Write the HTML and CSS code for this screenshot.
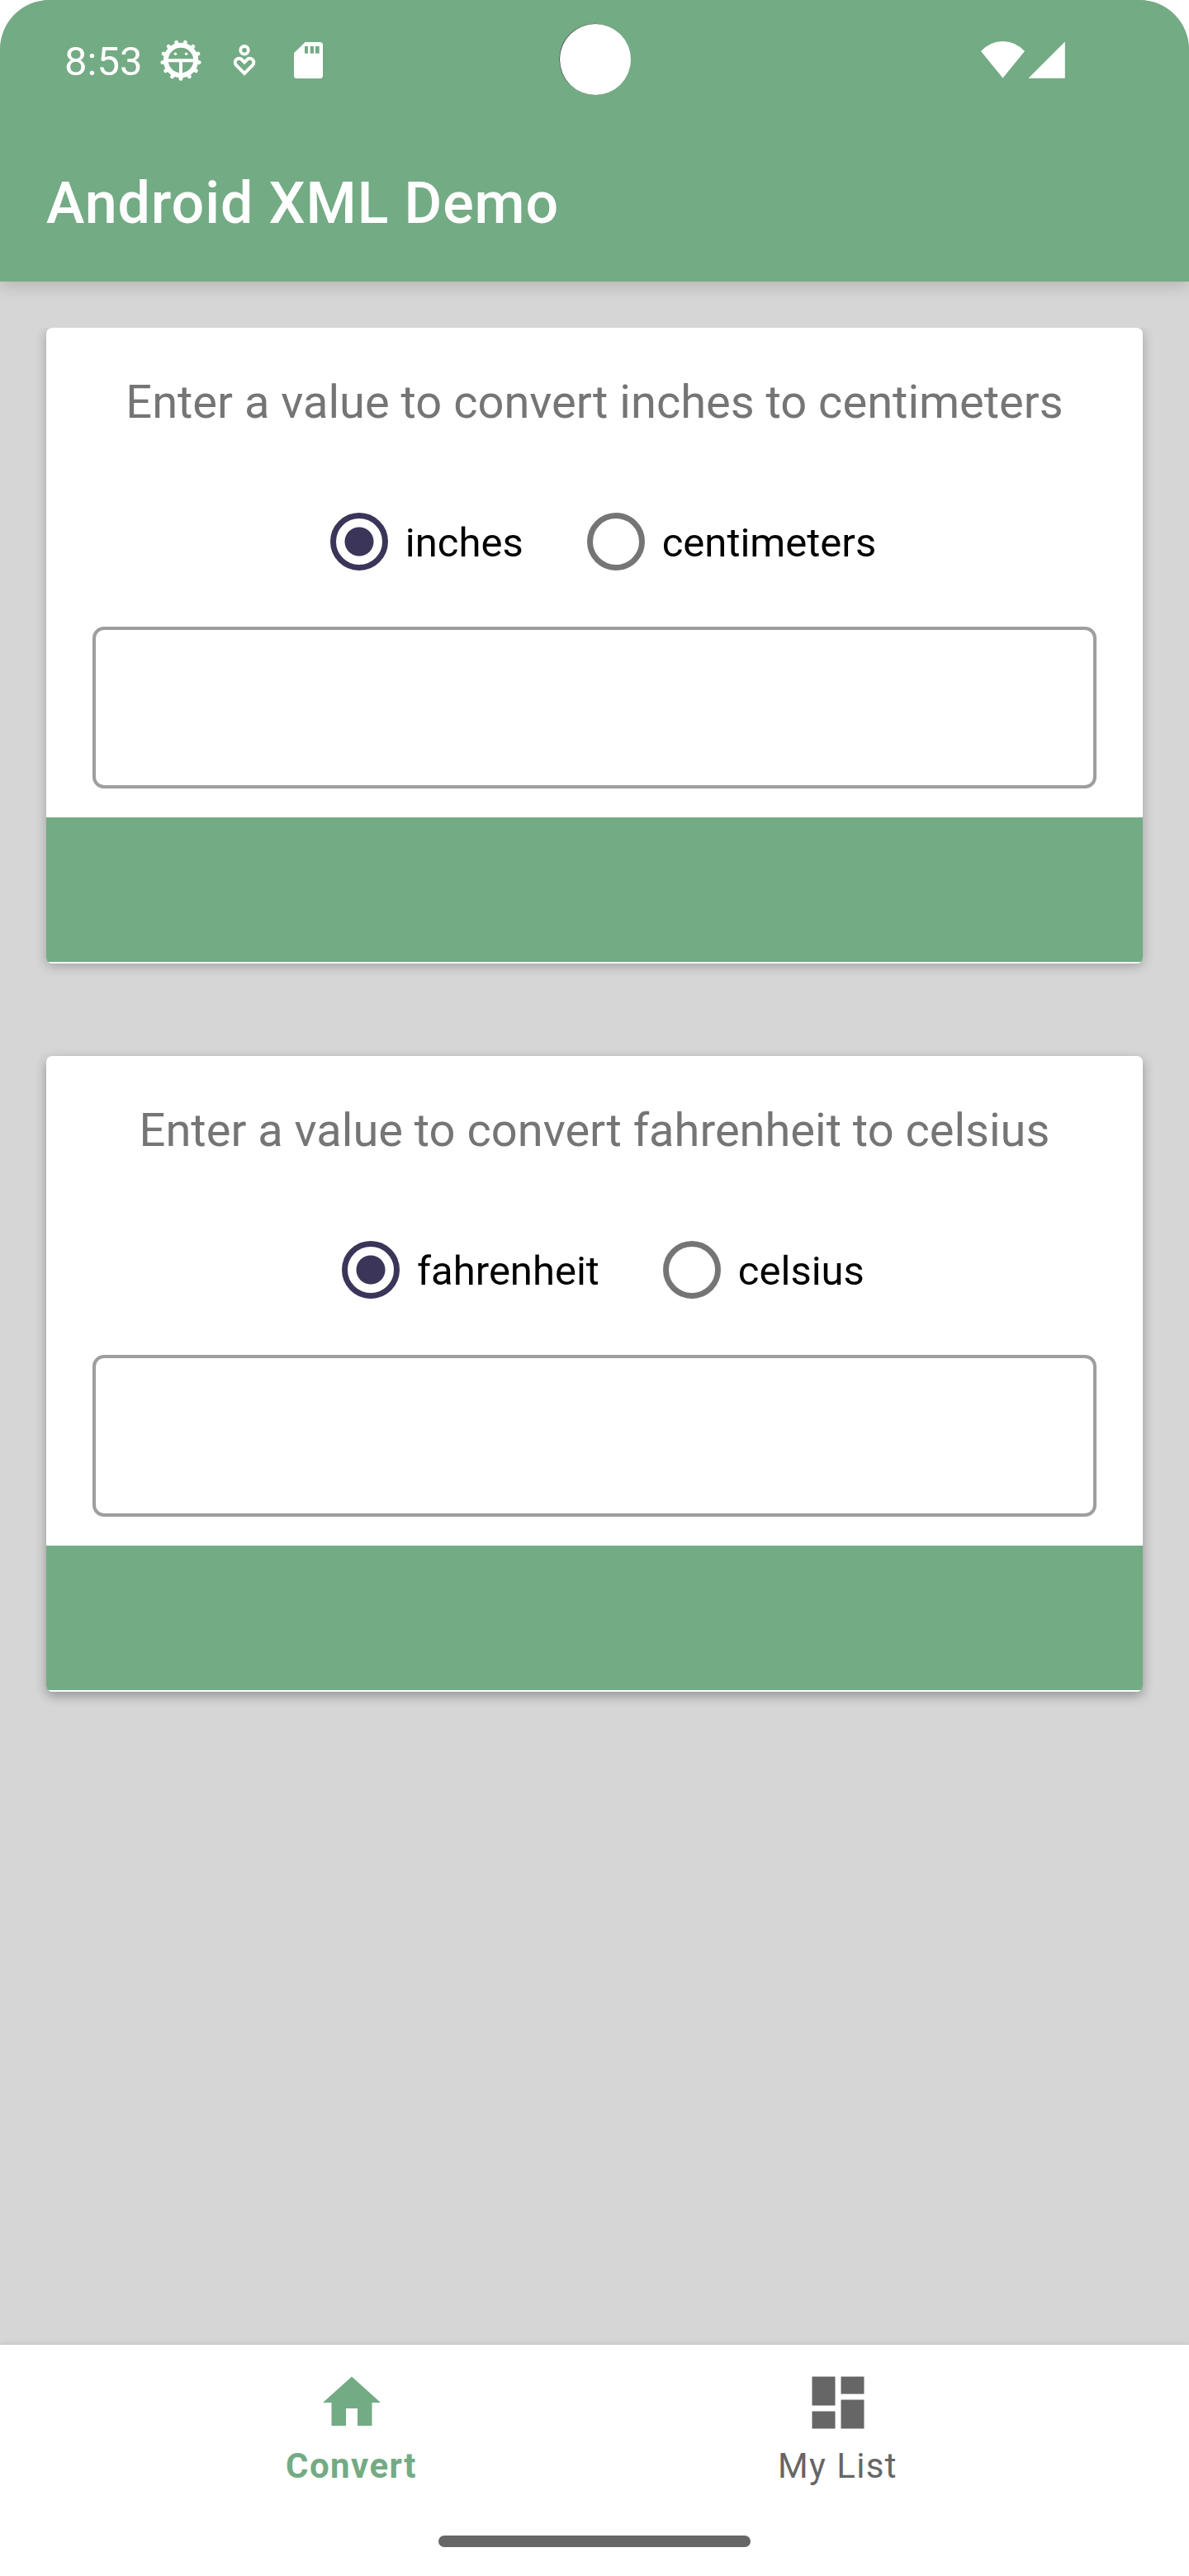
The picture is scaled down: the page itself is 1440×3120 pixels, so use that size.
FILE: index.html
```html
<!DOCTYPE html>
<html lang="en">
<head>
<meta charset="utf-8">
<title>Android XML Demo</title>
<link rel="stylesheet" href="styles.css">
</head>
<body>
<div class="screen">
  <header class="header">
    <div class="status">
      <span class="clock">8:53</span>
      <svg class="debug" width="52" height="52" viewBox="-26 -26 52 52" fill="none" stroke="#fff">
        <circle r="18.2" stroke-width="6"/>
        <g stroke-width="4.8" stroke-linecap="round">
          <path id="tooth" d="M0 19V22.4"/>
          <use href="#tooth" transform="rotate(27.69)"/><use href="#tooth" transform="rotate(55.38)"/>
          <use href="#tooth" transform="rotate(83.08)"/><use href="#tooth" transform="rotate(110.77)"/>
          <use href="#tooth" transform="rotate(138.46)"/><use href="#tooth" transform="rotate(166.15)"/>
          <use href="#tooth" transform="rotate(193.85)"/><use href="#tooth" transform="rotate(221.54)"/>
          <use href="#tooth" transform="rotate(249.23)"/><use href="#tooth" transform="rotate(276.92)"/>
          <use href="#tooth" transform="rotate(304.62)"/><use href="#tooth" transform="rotate(332.31)"/>
        </g>
        <path d="M-16 .3H16M0 0V17" stroke-width="4"/>
        <g fill="#fff" stroke="none"><circle cx="-6.6" cy="-7.7" r="1.8"/><circle cx="6.6" cy="-7.7" r="1.8"/></g>
      </svg>
      <svg class="wellbeing" width="30" height="40" viewBox="0 0 30 40" fill="none" stroke="#fff" stroke-width="4">
        <circle cx="15" cy="7.8" r="4.8" stroke-width="3.8"/>
        <path d="M15 35.9L5 25.8A4.7 4.7 0 0 1 11.9 19.3L15 22.5L18.1 19.3A4.7 4.7 0 0 1 25 25.8Z"/>
      </svg>
      <svg class="sdcard" width="35" height="44" viewBox="0 0 35 44">
        <path fill="#fff" fill-rule="evenodd" d="M13.500 0H31.500Q35 0 35 3.500V40.500Q35 44 31.500 44H3.500Q0 44 0 40.500V13.300ZM13 5V13.700H17V5ZM19.700 5V13.700H24V5ZM26 5V13.700H30.700V5Z"/>
      </svg>
      <span class="camera"></span>
      <svg class="signal" width="102" height="45" viewBox="0 0 102 45" fill="#fff">
        <path d="M26.500 44.500L0 12Q11.500 0 26.500 0T53 12ZM101.800 .5V44.700H57.500Z"/>
      </svg>
    </div>
    <h1 class="title">Android XML Demo</h1>
  </header>

  <main class="content">
    <section class="card card-first">
      <div class="card-body">
        <h2 class="prompt">Enter a value to convert inches to centimeters</h2>
        <div class="options">
          <label class="option"><input class="radio" type="radio" name="length" checked><span>inches</span></label>
          <label class="option"><input class="radio" type="radio" name="length"><span>centimeters</span></label>
        </div>
        <input class="field" type="text" aria-label="Length">
        <div class="result"></div>
      </div>
    </section>
    <section class="card card-second">
      <div class="card-body">
        <h2 class="prompt">Enter a value to convert fahrenheit to celsius</h2>
        <div class="options">
          <label class="option"><input class="radio" type="radio" name="temperature" checked><span>fahrenheit</span></label>
          <label class="option"><input class="radio" type="radio" name="temperature"><span>celsius</span></label>
        </div>
        <input class="field" type="text" aria-label="Temperature">
        <div class="result"></div>
      </div>
    </section>
  </main>

  <footer class="footer">
    <nav class="tabs">
      <a class="tab active">
        <svg width="84" height="84" viewBox="0 0 24 24" fill="currentColor"><path d="M10 20v-6h4v6h5v-8h3L12 3 2 12h3v8z"/></svg>
        <span>Convert</span>
      </a>
      <a class="tab">
        <svg width="84" height="84" viewBox="0 0 24 24" fill="currentColor"><path d="M3 13h8V3H3v10zm0 8h8v-6H3v6zm10 0h8V11h-8v10zm0-18v6h8V3h-8z"/></svg>
        <span>My List</span>
      </a>
    </nav>
    <div class="handle"></div>
  </footer>
</div>
</body>
</html>
```
FILE: styles.css
```css
* { box-sizing: border-box; }

body {
  margin: 0;
  background: #fff;
  font-family: Roboto, "Liberation Sans", sans-serif;
}

.screen {
  width: 1440px;
  height: 3120px;
  display: flex;
  flex-direction: column;
  border-radius: 60px 60px 0 0;
  overflow: hidden;
  background: #d6d6d6;
}

.header {
  position: relative;
  height: 341px;
  flex: none;
  background: #73ab84;
  color: #fff;
  box-shadow: 0 4px 20px rgba(0, 0, 0, .18);
}

.status {
  position: relative;
  display: flex;
  align-items: flex-start;
  height: 145px;
  padding-left: 78px;
}

.clock {
  width: 115px;
  margin-top: 46px;
  font-size: 49px;
  line-height: 58px;
}

.debug { margin-top: 47px; }
.wellbeing { margin: 53px 0 0 36px; }
.sdcard { margin: 51px 0 0 45px; }
.signal { margin: 50px 150px 0 auto; }

.camera {
  position: absolute;
  left: 677.5px;
  top: 29px;
  width: 86px;
  height: 86px;
  border-radius: 50%;
  background: #fff;
  box-shadow: -.6px -.3px 0 #333;
}

.title {
  margin: 60px 0 0 56px;
  font-size: 70px;
  font-weight: 500;
  line-height: 82px;
  letter-spacing: .875px;
}

.content {
  flex: 1;
  display: flex;
  flex-direction: column;
  gap: 112px;
  padding: 56px;
}

.card {
  height: 770px;
  border-radius: 7px;
  background: #fff;
}

.card-first {
  box-shadow: 0 3px 14px rgba(0, 0, 0, .26);
  clip-path: inset(0 -30px -30px -30px);
}

.card-second { box-shadow: 0 5px 14px rgba(0, 0, 0, .32); }

.card-body {
  height: 770px;
  display: flex;
  flex-direction: column;
  border-radius: 7px;
  overflow: hidden;
}

.prompt {
  margin: 57px 0 0;
  color: #757575;
  font-size: 56px;
  font-weight: 400;
  line-height: 66px;
  text-align: center;
}

.options {
  display: flex;
  justify-content: center;
  gap: 56px;
  margin-top: 80px;
}

.option {
  display: flex;
  align-items: center;
  height: 112px;
  font-size: 49px;
  line-height: 58px;
  color: #000;
}

.option span { padding-top: 4px; }

.radio {
  appearance: none;
  width: 70px;
  height: 70px;
  margin: 0 21px;
  border: 7px solid #757575;
  border-radius: 50%;
}

.radio:checked {
  border-color: #3b3559;
  background: radial-gradient(circle, #3b3559 17px, transparent 18px);
}

.field {
  height: 196px;
  margin: 47px 56px 0;
  border: 4px solid #9e9e9e;
  border-radius: 14px;
  background: #fff;
}

.result {
  height: 175px;
  margin-top: 35px;
  background: #73ab84;
}

.footer {
  height: 280px;
  background: #fff;
  box-shadow: 0 0 7px rgba(0, 0, 0, .12);
}

.tabs {
  display: flex;
  justify-content: center;
  height: 231px;
}

.tab {
  width: 589px;
  display: flex;
  flex-direction: column;
  align-items: center;
  padding-top: 28px;
  color: #666;
  font-size: 42px;
  line-height: 50px;
  letter-spacing: 1.4px;
}

.tab span { margin-top: 10px; }
.active { color: #73ab84; font-weight: 700; }

.handle {
  width: 378px;
  height: 14px;
  margin: 0 auto;
  border-radius: 7px;
  background: #666;
}
```
